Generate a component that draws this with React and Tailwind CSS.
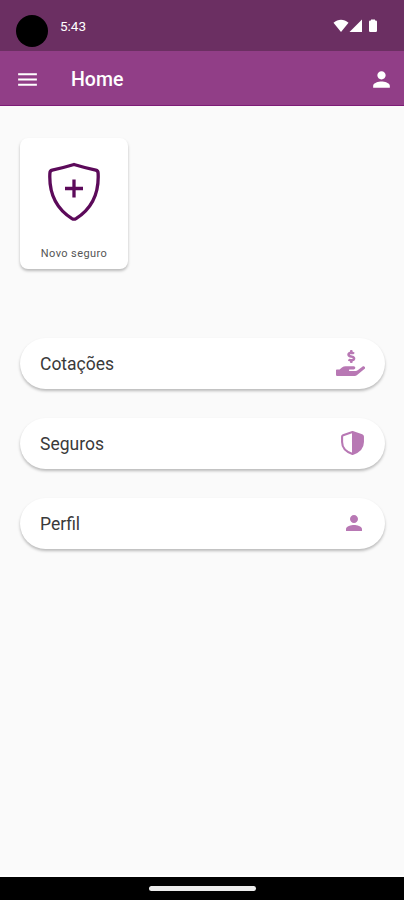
import React from "react";
import { MdMenu, MdPerson } from "react-icons/md";
import { FaHandHoldingUsd } from "react-icons/fa";

const ShieldPlus = () => (
  <svg width="54" height="60" viewBox="0 0 54 60" fill="none" stroke="#5c0a5a">
    <path
      d="M27 2.500C20 4.600 12.500 6.600 5.200 8.200Q3 8.800 2.900 11C1.800 31 9 46.500 25 56.600Q27 57.800 29 56.600C45 46.500 52.200 31 51.100 11Q51 8.800 48.800 8.200C41.500 6.600 34 4.600 27 2.500Z"
      strokeWidth="3.300"
      strokeLinejoin="round"
    />
    <path d="M27 17.500V35.500M18 26.500H36" strokeWidth="3.300" />
  </svg>
);

const ShieldHalf = () => (
  <svg
    className="mb-px"
    width="25"
    height="26"
    viewBox="0 0 24 26"
    preserveAspectRatio="none"
  >
    <path
      d="M12 2L21 5.200Q22 5.600 22 6.600V12C22 17.800 18 21.900 12 24C6 21.900 2 17.800 2 12V6.600Q2 5.600 3 5.200Z"
      fill="none"
      stroke="#b878b4"
      strokeWidth="2"
      strokeLinejoin="round"
    />
    <path
      d="M11.500 2L21 5.200Q22 5.600 22 6.600V12C22 17.800 18 21.900 11.500 24Z"
      fill="#b878b4"
    />
  </svg>
);

const items = [
  {
    label: "Cotações",
    icon: <FaHandHoldingUsd className="w-[29px] h-[26px] mb-0.5" />,
  },
  { label: "Seguros", icon: <ShieldHalf /> },
  { label: "Perfil", icon: <MdPerson size={24} className="-mr-px mb-px" /> },
];

const StatusBar = () => (
  <div className="h-[51px] bg-[#6b2f62] flex items-start pl-4 pr-[25px] text-white">
    <div className="w-8 h-8 mt-[15px] rounded-full bg-black" />
    <span className="ml-3 mt-[17px] text-[13.5px] leading-[18px]">5:43</span>
    <div className="ml-auto mt-[19px] flex items-center">
      <svg width="46" height="14" viewBox="0 0 46 14" fill="currentColor">
        <path d="M0.500 3.800C5 -0.200 11 -0.200 15.500 3.800L8 13Z" />
        <path d="M29 0.500V13H16.500Z" />
        <path d="M38 0.500h4v1h0.800q1.200 0 1.200 1.200v9.100q0 1.200-1.200 1.200h-5.600q-1.200 0-1.200-1.200V2.700q0-1.200 1.200-1.200h0.800Z" />
      </svg>
    </div>
  </div>
);

const App = () => {
  return (
    <div className="w-full h-screen flex flex-col bg-[#fafafa] font-['Roboto',sans-serif]">
      <StatusBar />

      {/* App bar */}
      <header className="h-[55px] bg-[#913e87] border-b border-[#7d1b76] flex items-center pt-0.5 pl-[15px] pr-[10px] text-white">
        <MdMenu size={25} />
        <h1 className="ml-[31px] mt-0.5 text-[19.5px] font-medium">Home</h1>
        <MdPerson size={25} className="ml-auto" />
      </header>

      <main className="flex-1 pl-5 pr-[19px] pt-8 border-b-2 border-white">
        {/* New insurance card */}
        <button className="w-[108px] h-[131px] rounded-lg bg-white shadow-[0_2px_3px_rgba(0,0,0,0.26)] flex flex-col items-center pt-6">
          <ShieldPlus />
          <span className="mt-[25px] text-[11px] leading-[14px] tracking-[0.4px] text-[#555]">
            Novo seguro
          </span>
        </button>

        {/* Menu */}
        <div className="mt-[69px] flex flex-col gap-[29px]">
          {items.map((item) => (
            <button
              key={item.label}
              className="h-[51px] rounded-full bg-white shadow-[0_2px_3px_rgba(0,0,0,0.26)] flex items-center justify-between px-5 text-[#b878b4]"
            >
              <span className="pt-0.5 text-[17.5px] text-[#3a3a3a]">
                {item.label}
              </span>
              {item.icon}
            </button>
          ))}
        </div>
      </main>

      {/* Gesture bar */}
      <div className="h-[23px] bg-black flex justify-center pt-[9px]">
        <div className="w-[107px] h-[5px] rounded-full bg-[#ececec]" />
      </div>
    </div>
  );
};

export default App;
